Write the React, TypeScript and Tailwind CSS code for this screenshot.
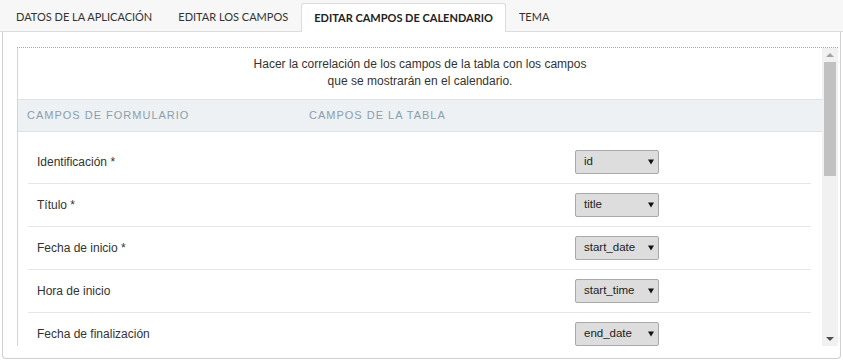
import { useState } from 'react';

const TABS = [
  'Datos de la aplicación',
  'Editar los campos',
  'Editar campos de calendario',
  'Tema',
];

const FIELDS = [
  { label: 'Identificación *', value: 'id' },
  { label: 'Título *', value: 'title' },
  { label: 'Fecha de inicio *', value: 'start_date' },
  { label: 'Hora de inicio', value: 'start_time' },
  { label: 'Fecha de finalización', value: 'end_date' },
];

function FakeSelect({ value }: { value: string }) {
  return (
    <div className="flex h-[24px] w-[84px] items-center justify-between rounded-[2px] border border-[#a9a9a9] bg-[#dddddd] pl-[8px] pr-[4px] text-[11.5px] text-[#222]">
      <span>{value}</span>
      <svg width="6" height="6" viewBox="0 0 6 6" className="shrink-0">
        <path d="M0 0.5h6L3 5.5z" fill="#111" />
      </svg>
    </div>
  );
}

function Scrollbar() {
  return (
    <div className="flex w-[16px] shrink-0 flex-col items-center bg-[#f1f1f1]">
      <div className="flex h-[14px] items-center justify-center">
        <div className="h-0 w-0 border-x-[4px] border-b-[4px] border-x-transparent border-b-[#a3a3a3]" />
      </div>
      <div className="h-[114px] w-[12px] bg-[#c1c1c1]" />
      <div className="flex-1" />
      <div className="flex h-[14px] items-center justify-center">
        <div className="h-0 w-0 border-x-[4px] border-t-[4px] border-x-transparent border-t-[#505050]" />
      </div>
    </div>
  );
}

export default function App() {
  const [active, setActive] = useState(2);

  return (
    <div className="h-[362px] w-[843px] overflow-hidden bg-white font-['Liberation_Sans',Arial,sans-serif]">
      <nav className="flex h-[32px] items-end border-b border-[#dcdcdc] bg-[#f7f7f7] pl-[3px] font-['Lato','Open_Sans',sans-serif] text-[11px]">
        {TABS.map((t, i) => (
          <button
            key={t}
            onClick={() => setActive(i)}
            className={
              i === active
                ? '-mb-px h-[29px] rounded-t-[3px] border border-b-0 border-[#dcdcdc] bg-white px-[12px] font-bold uppercase text-[#222]'
                : 'h-[28px] px-[13px] uppercase text-[#333]'
            }
          >
            {t}
          </button>
        ))}
      </nav>

      <section className="mx-[2px] h-[327px] rounded-b-[4px] border-x border-b border-[#cfcfcf] pb-[12px] pl-[14px] pr-[2px] pt-[15px]">
        <div className="flex h-[299px] border-t border-dotted border-[#9aa8bd]">
          <div className="flex-1 overflow-hidden border-l border-[#d5d5d5]">
            <p className="pb-[9px] pt-[8px] text-center text-[12px] leading-[17px] text-[#333]">
              Hacer la correlación de los campos de la tabla con los campos
              <br />
              que se mostrarán en el calendario.
            </p>

            <div className="flex h-[33px] items-center border-y border-[#dde2e6] bg-[#eef1f4] text-[11px] tracking-[1px] text-[#8a9eae]">
              <span className="w-[291px] pl-[9px]">CAMPOS DE FORMULARIO</span>
              <span>CAMPOS DE LA TABLA</span>
            </div>

            <div className="ml-[10px] mr-[11px] pt-[9px]">
              {FIELDS.map((f) => (
                <div
                  key={f.value}
                  className="flex h-[43px] items-center border-b border-[#e6e6e6] pl-[9px] text-[12px] text-[#333]"
                >
                  <span className="w-[538px]">{f.label}</span>
                  <FakeSelect value={f.value} />
                </div>
              ))}
            </div>
          </div>
          <Scrollbar />
        </div>
      </section>
    </div>
  );
}
